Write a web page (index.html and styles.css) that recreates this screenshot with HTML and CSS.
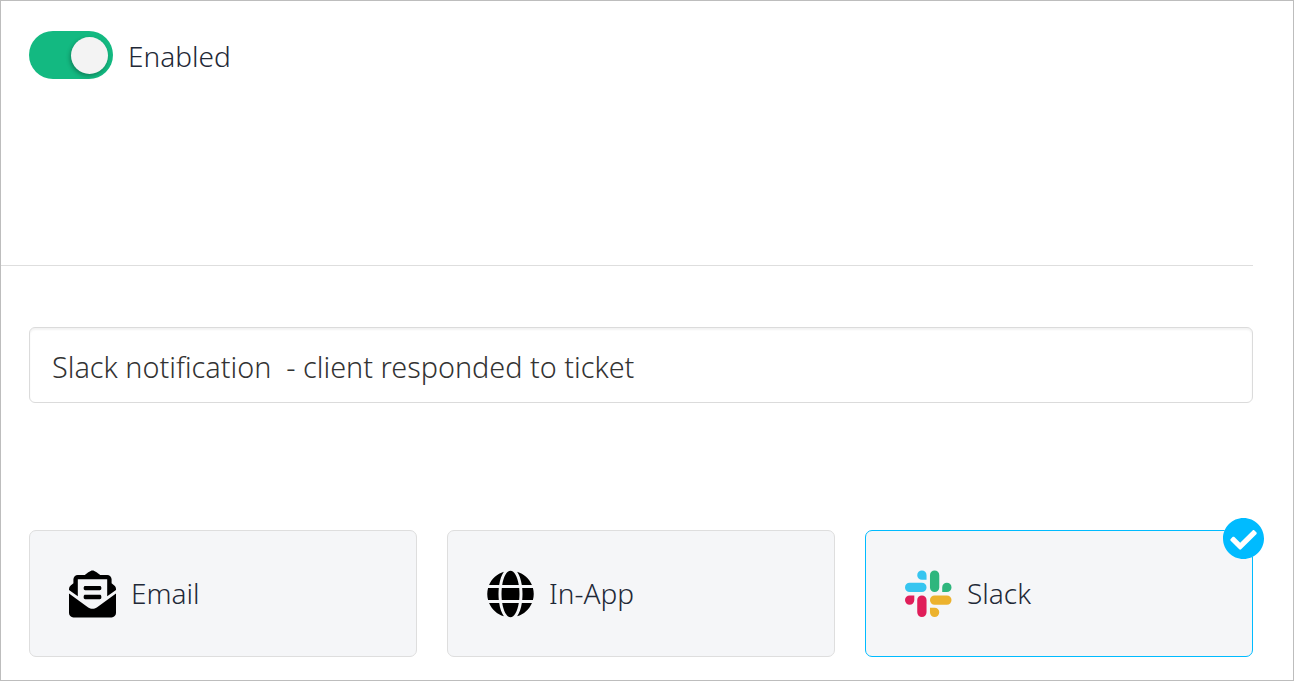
FILE: index.html
```html
<!DOCTYPE html>
<html lang="en">
<head>
  <meta charset="UTF-8" />
  <meta name="viewport" content="width=device-width, initial-scale=1.0" />
  <title>Notification Settings</title>
  <link rel="stylesheet" href="styles.css">
</head>
<body>
  <div class="frame">
    <!-- Status toggle -->
    <div class="status-row">
      <span class="toggle"><span class="toggle-knob"></span></span>
      <span class="toggle-label">Enabled</span>
    </div>

    <!-- Notification name -->
    <input class="name-input" type="text" value="Slack notification  - client responded to ticket">

    <!-- Channel cards -->
    <div class="channels">
      <div class="channel-card">
        <svg class="channel-icon" viewBox="0 0 512 512"><path d="M176 216h160c8.84 0 16-7.16 16-16v-16c0-8.84-7.16-16-16-16H176c-8.84 0-16 7.16-16 16v16c0 8.84 7.16 16 16 16zm-16 80c0 8.84 7.16 16 16 16h160c8.84 0 16-7.16 16-16v-16c0-8.84-7.16-16-16-16H176c-8.84 0-16 7.16-16 16v16zm96 121.13c-16.42 0-32.84-5.06-46.86-15.19L0 250.86V464c0 26.51 21.49 48 48 48h416c26.51 0 48-21.49 48-48V250.86L302.86 401.94c-14 10.12-30.44 15.19-46.86 15.19zm237.61-254.18c-8.85-6.94-17.24-13.47-29.61-22.81V96c0-26.51-21.49-48-48-48h-77.55c-3.04-2.2-5.87-4.26-9.04-6.56C312.6 29.17 279.2-.35 256 0c-23.2-.35-56.59 29.17-73.41 41.44-3.17 2.3-6 4.36-9.04 6.56H96c-26.51 0-48 21.49-48 48v44.14c-12.37 9.33-20.76 15.87-29.61 22.81A47.995 47.995 0 0 0 0 200.72v10.65l96 69.35V96h320v184.72l96-69.35v-10.65c0-14.74-6.78-28.67-18.39-37.77z"/></svg>
        <span>Email</span>
      </div>
      <div class="channel-card">
        <svg class="channel-icon" viewBox="0 0 496 512"><path d="M336.5 160C322 70.7 287.8 8 248 8s-74 62.7-88.5 152h177zM152 256c0 22.2 1.2 43.5 3.3 64h185.3c2.1-20.5 3.3-41.8 3.3-64s-1.2-43.5-3.3-64H155.3c-2.1 20.5-3.3 41.8-3.3 64zm324.7-96c-28.6-67.9-86.5-120.4-158-141.6 24.4 33.8 41.2 84.7 50 141.6h108zM177.2 18.4C105.8 39.6 47.8 92.1 19.3 160h108c8.7-56.9 25.5-107.8 49.9-141.6zM487.4 192H372.7c2.1 21 3.3 42.5 3.3 64s-1.2 43-3.3 64h114.6c5.5-20.5 8.6-41.8 8.6-64s-3.1-43.5-8.5-64zM120 256c0-21.5 1.2-43 3.3-64H8.6C3.2 212.5 0 233.8 0 256s3.2 43.5 8.6 64h114.6c-2-21-3.2-42.5-3.2-64zm39.5 96c14.5 89.3 48.7 152 88.5 152s74-62.7 88.5-152h-177zm159.3 141.6c71.4-21.2 129.4-73.7 158-141.6h-108c-8.8 56.9-25.6 107.8-50 141.6zM19.3 352c28.6 67.9 86.5 120.4 158 141.6-24.4-33.8-41.2-84.7-50-141.6h-108z"/></svg>
        <span>In-App</span>
      </div>
      <div class="channel-card selected">
        <svg class="channel-icon" viewBox="0 0 48 48">
          <path fill="#36c5f0" d="M12.5 4.75a4.75 4.75 0 0 1 9.5 0V9.5h-4.75a4.75 4.75 0 0 1-4.75-4.75zM4.75 12.5h12.5a4.75 4.75 0 0 1 0 9.5H4.75a4.75 4.75 0 0 1 0-9.5z"/>
          <path fill="#2eb67d" d="M25.5 4.75a4.75 4.75 0 0 1 9.5 0v12.5a4.75 4.75 0 0 1-9.5 0zM38 17.25a4.75 4.75 0 1 1 4.75 4.75H38z"/>
          <path fill="#ecb22e" d="M30.25 25.5h12.5a4.75 4.75 0 0 1 0 9.5h-12.5a4.75 4.75 0 0 1 0-9.5zM25.5 38h4.75a4.75 4.75 0 1 1-4.75 4.75z"/>
          <path fill="#e01e5a" d="M12.5 30.25a4.75 4.75 0 0 1 9.5 0v12.5a4.75 4.75 0 0 1-9.5 0zM4.75 25.5H9.5v4.75a4.75 4.75 0 1 1-4.75-4.75z"/>
        </svg>
        <span>Slack</span>
        <span class="check-badge">
          <svg viewBox="8 8 496 496"><path d="M504 256c0 136.967-111.033 248-248 248S8 392.967 8 256 119.033 8 256 8s248 111.033 248 248zM227.314 387.314l184-184c6.248-6.248 6.248-16.379 0-22.627l-22.627-22.627c-6.248-6.249-16.379-6.249-22.628 0L216 308.118l-70.059-70.059c-6.248-6.248-16.379-6.248-22.628 0l-22.627 22.627c-6.248 6.248-6.248 16.379 0 22.627l104 104c6.249 6.249 16.379 6.249 22.628.001z"/></svg>
        </span>
      </div>
    </div>
  </div>
</body>
</html>
```

FILE: styles.css
```css
/* Reset and base styles */
* {
  margin: 0;
  padding: 0;
  box-sizing: border-box;
}
html, body {
  height: 100%;
  font-family: "Noto Sans", Arial, sans-serif;
  background: #fff;
}
.frame {
  height: 681px;
  border: 1px solid #bdbdbd;
  overflow: hidden;
}
/* Toggle row */
.status-row {
  display: flex;
  align-items: flex-start;
  gap: 15px;
  width: 1252px;
  height: 265px;
  padding: 30px 0 0 28px;
  border-bottom: 1px solid #dedede;
}
.toggle {
  display: flex;
  justify-content: flex-end;
  align-items: center;
  width: 84px;
  height: 48px;
  padding-right: 5px;
  border-radius: 24px;
  background: #13b981;
}
.toggle-knob {
  width: 37px;
  height: 37px;
  border-radius: 50%;
  background: #f3f3f3;
  box-shadow: -1px 2px 4px rgba(0, 0, 0, 0.3);
}
.toggle-label {
  font-size: 28px;
  font-weight: 300;
  line-height: 50px;
  color: #1f2937;
}
/* Name input */
.name-input {
  display: block;
  width: 1224px;
  height: 76px;
  margin: 61px 0 0 28px;
  padding: 2px 22px 0;
  border: 1px solid #dbdbdb;
  border-radius: 6px;
  outline: none;
  font-family: inherit;
  font-size: 28.8px;
  font-weight: 300;
  color: #333;
  box-shadow: inset 0 2px 2px rgba(0, 0, 0, 0.05);
}
/* Channel cards */
.channels {
  display: flex;
  gap: 30px;
  margin: 127px 0 0 28px;
  width: 1224px;
}
.channel-card {
  position: relative;
  flex: 1;
  display: flex;
  align-items: center;
  gap: 15px;
  height: 127px;
  padding-left: 39px;
  border: 1px solid #dedede;
  border-radius: 7px;
  background: #f5f6f8;
  font-size: 28px;
  font-weight: 300;
  line-height: 38px;
  color: #1f2937;
}
.channel-card span {
  margin-bottom: 2px;
}
.channel-card.selected {
  border-color: #00bbff;
}
.channel-icon {
  width: 47px;
  height: 48px;
}
.channel-card .check-badge {
  position: absolute;
  top: -13px;
  right: -12px;
  width: 41px;
  height: 41px;
  margin: 0;
  border-radius: 50%;
  background: #fff;
}
.check-badge svg {
  display: block;
  width: 41px;
  height: 41px;
  fill: #00bbff;
}
```
